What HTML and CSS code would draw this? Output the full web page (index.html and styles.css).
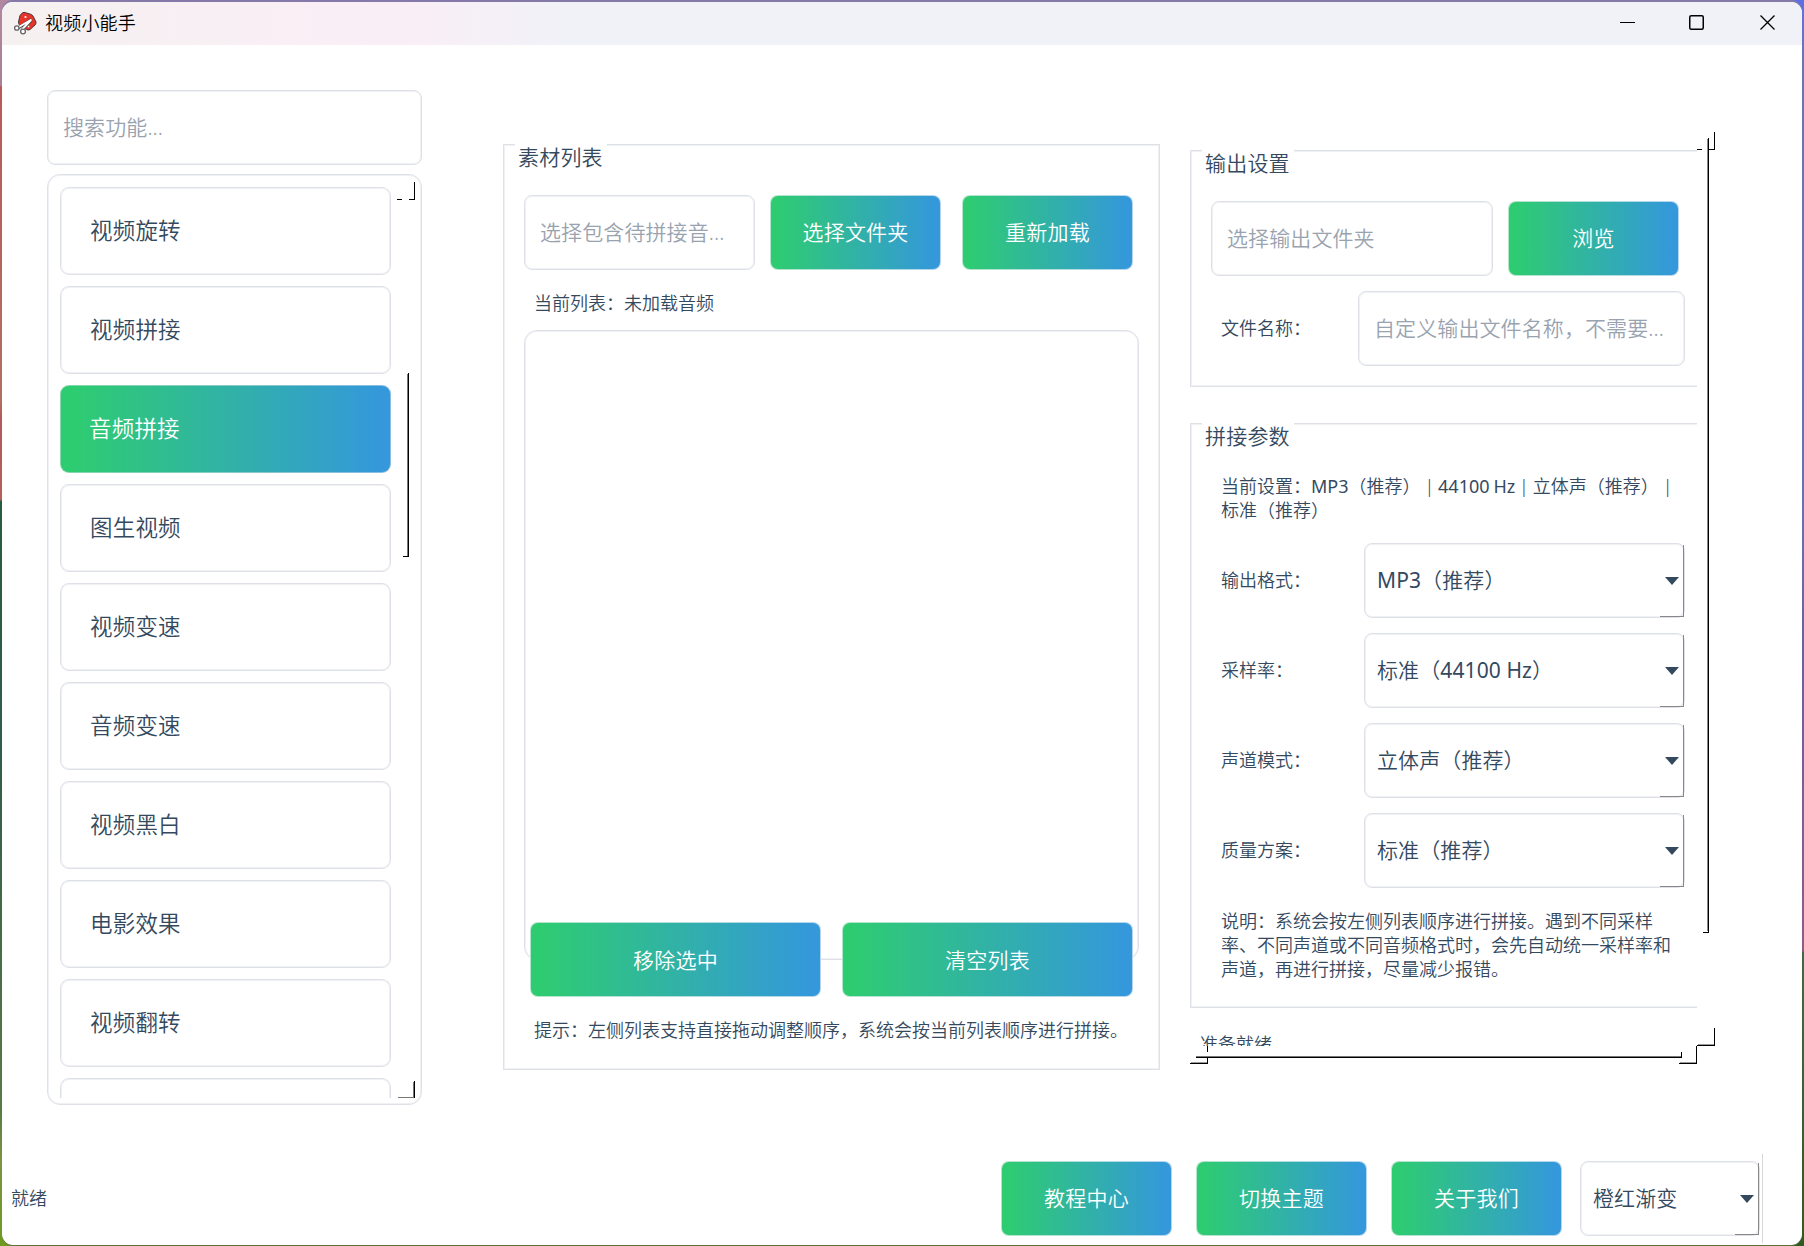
FILE: index.html
```html
<!DOCTYPE html>
<html lang="zh-CN">
<head>
    <meta charset="UTF-8">
    <title>视频小能手</title>
    <link rel="stylesheet" href="styles.css">
</head>
<body>
    <div class="window">
        <header class="titlebar">
            <svg class="logo" width="24" height="24" viewBox="0 0 24 24">
                <path d="M7 4.500 Q9 1.500 11 1.300 L17.500 3.200 Q20 4 20.500 6 L23 11 Q23.300 12.500 22 14 L17 18.500 Q15.500 19.500 13.500 18.500 L7.500 15 Q5.500 13.500 5.500 11 Z" fill="#e8352b" stroke="#4a3432" stroke-width="1"/>
                <circle cx="12.500" cy="6" r="1.100" fill="#fff"/>
                <circle cx="15.500" cy="15.500" r="0.900" fill="#fff"/>
                <path d="M5 17 L18.500 8.500 M9 19 L18.500 9" stroke="#444" stroke-width="3.200"/>
                <path d="M5 16.500 L18.500 8.500 M9 18.500 L18 9" stroke="#fff" stroke-width="2"/>
                <circle cx="3.800" cy="17" r="2.200" fill="#fff" stroke="#666" stroke-width="1.300"/>
                <circle cx="10" cy="20.500" r="2.400" fill="#fff" stroke="#666" stroke-width="1.300"/>
            </svg>
            <span class="app-name">视频小能手</span>
            <div class="window-buttons">
                <svg width="15" height="15" viewBox="0 0 15 15"><path d="M0 7.500 H15" stroke="#000"/></svg>
                <svg width="15" height="15" viewBox="0 0 15 15"><rect x="0.750" y="0.750" width="13.500" height="13.500" rx="1.500" fill="none" stroke="#000" stroke-width="1.500"/></svg>
                <svg width="15" height="15" viewBox="0 0 15 15"><path d="M0.500 0.500 L14.500 14.500 M14.500 0.500 L0.500 14.500" stroke="#000" stroke-width="1.300"/></svg>
            </div>
        </header>

        <main class="main">
            <aside class="sidebar">
                <div class="input">搜索功能...</div>
                <div class="nav-box">
                    <nav class="nav-list">
                        <a class="nav-item">视频旋转</a>
                        <a class="nav-item">视频拼接</a>
                        <a class="nav-item active">音频拼接</a>
                        <a class="nav-item">图生视频</a>
                        <a class="nav-item">视频变速</a>
                        <a class="nav-item">音频变速</a>
                        <a class="nav-item">视频黑白</a>
                        <a class="nav-item">电影效果</a>
                        <a class="nav-item">视频翻转</a>
                        <a class="nav-item"></a>
                    </nav>
                    <!-- scrollbar -->
                    <svg class="nav-scroll" width="24" height="931" viewBox="0 0 24 931" shape-rendering="crispEdges">
                        <path d="M0 25.500 H5 M12 25.500 H17" stroke="#000"/>
                        <path d="M17.500 8 V26" stroke="#000"/>
                        <path d="M10.500 200 V382" stroke="#777"/>
                        <path d="M11.500 199 V383 M6 382.500 H12" stroke="#000"/>
                        <path d="M1 923.500 H17 M16.500 908 V924" stroke="#777"/>
                        <path d="M17.500 907 V924" stroke="#000"/>
                    </svg>
                </div>
            </aside>

            <section class="group material">
                <h3 class="legend">素材列表</h3>
                <div class="row">
                    <div class="input folder-input">选择包含待拼接音...</div>
                    <button class="btn">选择文件夹</button>
                    <button class="btn reload">重新加载</button>
                </div>
                <p class="list-status">当前列表：未加载音频</p>
                <div class="file-list"></div>
                <div class="list-actions">
                    <button class="btn">移除选中</button>
                    <button class="btn">清空列表</button>
                </div>
                <p class="hint">提示：左侧列表支持直接拖动调整顺序，系统会按当前列表顺序进行拼接。</p>
            </section>

            <section class="settings">
                <div class="settings-view">
                    <div class="group output">
                        <h3 class="legend">输出设置</h3>
                        <div class="row">
                            <div class="input output-input">选择输出文件夹</div>
                            <button class="btn">浏览</button>
                        </div>
                        <div class="row name-row">
                            <label>文件名称：</label>
                            <div class="input name-input">自定义输出文件名称，不需要...</div>
                        </div>
                    </div>
                    <div class="group params">
                        <h3 class="legend">拼接参数</h3>
                        <p class="summary">当前设置：<span class="latin">MP3</span>（推荐） | <span class="latin">44100 Hz</span> | 立体声（推荐） |<br>标准（推荐）</p>
                        <div class="field"><label>输出格式：</label><div class="combo"><span class="latin">MP3</span>（推荐）</div></div>
                        <div class="field"><label>采样率：</label><div class="combo">标准（<span class="latin">44100 Hz</span>）</div></div>
                        <div class="field"><label>声道模式：</label><div class="combo">立体声（推荐）</div></div>
                        <div class="field"><label>质量方案：</label><div class="combo">标准（推荐）</div></div>
                        <p class="desc">说明：系统会按左侧列表顺序进行拼接。遇到不同采样<br>率、不同声道或不同音频格式时，会先自动统一采样率和<br>声道，再进行拼接，尽量减少报错。</p>
                    </div>
                    <p class="ready">准备就绪</p>
                </div>
                <!-- vertical and horizontal scrollbars -->
                <svg class="settings-scroll" width="530" height="940" viewBox="0 0 530 940" shape-rendering="crispEdges">
                    <path d="M507 19.500 H512 M519 19.500 H524 M524.500 2 V20" stroke="#000"/>
                    <path d="M517.500 9 V801" stroke="#888"/>
                    <path d="M518.500 8 V803 M513 802.500 H519" stroke="#000"/>
                    <path d="M524.500 898 V916 M507 915.500 H525 M506.500 916 V934 M489 933.500 H507" stroke="#000"/>
                    <path d="M508 914.500 H524 M490 932.500 H506" stroke="#999"/>
                    <path d="M6 926.500 H491" stroke="#777"/>
                    <path d="M6 927.500 H492 M491.500 922 V928" stroke="#000"/>
                    <path d="M17.500 916 V922 M17.500 928 V934 M0 933.500 H18" stroke="#000"/>
                    <path d="M1 932.500 H17" stroke="#999"/>
                </svg>
            </section>
        </main>

        <footer class="statusbar">
            <span class="status">就绪</span>
            <button class="btn">教程中心</button>
            <button class="btn">切换主题</button>
            <button class="btn">关于我们</button>
            <div class="theme">
                <div class="combo">橙红渐变</div>
            </div>
        </footer>
    </div>
</body>
</html>
```
FILE: styles.css
```css
* {
    box-sizing: border-box;
}
body {
    margin: 0;
    padding: 2px 2px 1px;
    height: 1246px;
    overflow: hidden;
    font-family: "Noto Sans", "Noto Sans CJK SC", sans-serif;
    font-weight: 350;
    font-size: 18px;
    color: #34495e;
    /* desktop showing round the window */
    background:
        linear-gradient(#b487a0 0, #a87f95 86px, #b9595a 86px, #b07060 400px, #b4585a 420px, #b4605a 500px, #2b5a43 501px, #2f5d4a 750px, #5a7a45 1110px, #7b9442 1160px, #6f9a20 1246px) left / 50% 1246px no-repeat,
        linear-gradient(#5b70e8 0, #6b74b8 60px, #6a70b8 500px, #6a60a8 640px, #8f5c86 951px, #3f6a48 952px, #2f5a20 1246px) right / 50% 1246px no-repeat;
}
h3, p {
    margin: 0;
    font-weight: 350;
}
.window {
    display: flex;
    flex-direction: column;
    width: 1800px;
    height: 1243px;
    background: #fff;
    border-radius: 11px;
    overflow: hidden;
    box-shadow: 0 -2px 0 #8479a8, 0 1px 0 #5f7040;
}
.titlebar {
    display: flex;
    align-items: center;
    height: 43px;
    padding-left: 11px;
    background: linear-gradient(90deg, #f6f1f1 0, #faeef6 400px, #f1f2f8 560px, #f1f2f7);
    color: #000;
}
.logo {
    margin-top: -2px;
}
.app-name {
    margin-top: -3px;
    margin-left: 8px;
    letter-spacing: 0.2px;
}
.window-buttons {
    display: flex;
    gap: 56px;
    margin-top: -2px;
    margin-left: auto;
    margin-right: 27px;
}
.window-buttons svg:first-child {
    margin-right: -2px;
}
.main {
    display: flex;
    align-items: flex-start;
    height: 1107px;
    padding-left: 45px;
}
.input {
    height: 75px;
    padding-left: 15px;
    border: 1px solid #dee1e7;
    border-radius: 8px;
    box-shadow: inset 0 0 0 1px #eff1f4;
    background: #fff;
    color: #99a3af;
    font-size: 21px;
    letter-spacing: 0.1px;
    line-height: 72px;
    white-space: nowrap;
}
.btn {
    width: 171px;
    height: 75px;
    padding: 0 0 3px;
    border: 1px solid rgba(236, 240, 244, 0.7);
    border-radius: 8px;
    background: linear-gradient(90deg, #2ecc71 3%, #3498db 97%) border-box;
    color: #fff;
    font: inherit;
    font-size: 21px;
    letter-spacing: 0.2px;
}

/* sidebar */
.sidebar {
    width: 375px;
    margin-top: 45px;
}
.nav-box {
    position: relative;
    height: 931px;
    margin-top: 9px;
    padding: 12px 12px 6px;
    border: 1px solid #dee1e7;
    border-radius: 13px;
    box-shadow: inset 0 0 0 1px #eff1f4;
}
.nav-list {
    display: flex;
    flex-direction: column;
    gap: 11px;
    width: 331px;
    height: 911px;
    overflow: hidden;
}
.nav-item {
    flex: none;
    height: 88px;
    padding-left: 29px;
    border: 1px solid #dee1e7;
    border-radius: 9px;
    box-shadow: inset 0 0 0 1px #eff1f4;
    font-size: 22.5px;
    letter-spacing: 0.2px;
    line-height: 86px;
}
.nav-item.active {
    padding-left: 28px;
    border-color: rgba(222, 225, 231, 0.5);
    box-shadow: none;
    background: linear-gradient(90deg, #2ecc71 4%, #3498db 97%) border-box;
    color: #fff;
}
.nav-scroll {
    position: absolute;
    top: -1px;
    left: 349px;
}

/* group boxes */
.group {
    border: 1px solid #dee1e6;
    box-shadow: inset 0 0 0 1px #eff1f4;
    padding-left: 20px;
}
.legend {
    width: 92px;
    height: 28px;
    margin: -1px 0 23px -9px;
    padding-left: 3px;
    background: #fff;
    font-size: 21px;
    letter-spacing: 0.2px;
    line-height: 26px;
}
.row {
    display: flex;
}
.row .btn {
    margin-left: 15px;
}
.material {
    width: 657px;
    height: 926px;
    margin: 99px 0 0 81px;
}
.material .reload {
    margin-left: 21px;
}
.folder-input {
    width: 231px;
}
.list-status {
    padding: 7px 0 1px 10px;
    line-height: 52px;
}
.file-list {
    width: 615px;
    height: 630px;
    border: 1px solid #dee1e7;
    border-radius: 13px;
    box-shadow: inset 0 0 0 1px #eff1f4;
}
.list-actions {
    position: relative;
    display: flex;
    gap: 21px;
    margin: -38px 0 0 6px;
}
.list-actions .btn {
    width: 291px;
    padding-bottom: 1px;
}
.hint {
    padding-left: 10px;
    line-height: 67px;
    white-space: nowrap;
}

/* settings */
.settings {
    position: relative;
    width: 507px;
    margin: 105px 0 0 30px;
}
.settings-view {
    height: 896px;
    overflow: hidden;
}
.settings .group {
    width: 520px;
}
.output {
    height: 237px;
}
.output-input {
    width: 282px;
}
.name-row {
    align-items: center;
    margin-top: 15px;
    padding-left: 10px;
}
.name-row label {
    width: 137px;
    padding-bottom: 3px;
}
.name-input {
    width: 327px;
}
.params {
    height: 585px;
    margin-top: 36px;
}
.summary, .desc {
    padding-left: 10px;
    line-height: 24px;
    white-space: nowrap;
}
.summary {
    margin-bottom: 21px;
    word-spacing: -0.8px;
}
.latin {
    font-weight: 400;
}
.field {
    display: flex;
    align-items: center;
    margin-bottom: 15px;
    padding-left: 10px;
}
.field label {
    width: 143px;
    padding-bottom: 3px;
}
.combo {
    position: relative;
    width: 321px;
    height: 75px;
    padding-left: 12px;
    border: 1px solid #dee1e7;
    border-radius: 8px;
    box-shadow: inset 0 0 0 1px #eff1f4;
    font-size: 21px;
    letter-spacing: 0.1px;
    line-height: 72px;
}
.combo::before {
    content: "";
    position: absolute;
    right: -1px;
    top: 1px;
    width: 24px;
    height: 72px;
    border: solid #333;
    border-width: 0 1px 1px 0;
    box-shadow: inset -1px -1px 0 #888;
    clip-path: polygon(0 70px, 22px 70px, 22px 0, 24px 0, 24px 72px, 0 72px);
}
.combo::after {
    content: "";
    position: absolute;
    right: 5px;
    top: 33px;
    border: solid transparent;
    border-width: 8px 7px 0;
    border-top-color: #34495e;
}
.desc {
    margin-top: 21px;
}
.ready {
    margin-top: 24px;
    padding-left: 10px;
    line-height: 24px;
}
.settings-scroll {
    position: absolute;
    left: 0;
    top: -20px;
}

/* status bar */
.statusbar {
    display: flex;
    align-items: center;
    height: 93px;
    padding: 0 39px 0 9px;
}
.status {
    margin-right: auto;
    padding-bottom: 3px;
}
.statusbar .btn {
    margin-right: 24px;
}
.theme {
    display: flex;
    align-items: center;
    height: 89px;
    margin-left: -6px;
    padding-right: 2px;
    border-right: 1px solid #d8d8d8;
}
.theme .combo {
    width: 180px;
}
```
